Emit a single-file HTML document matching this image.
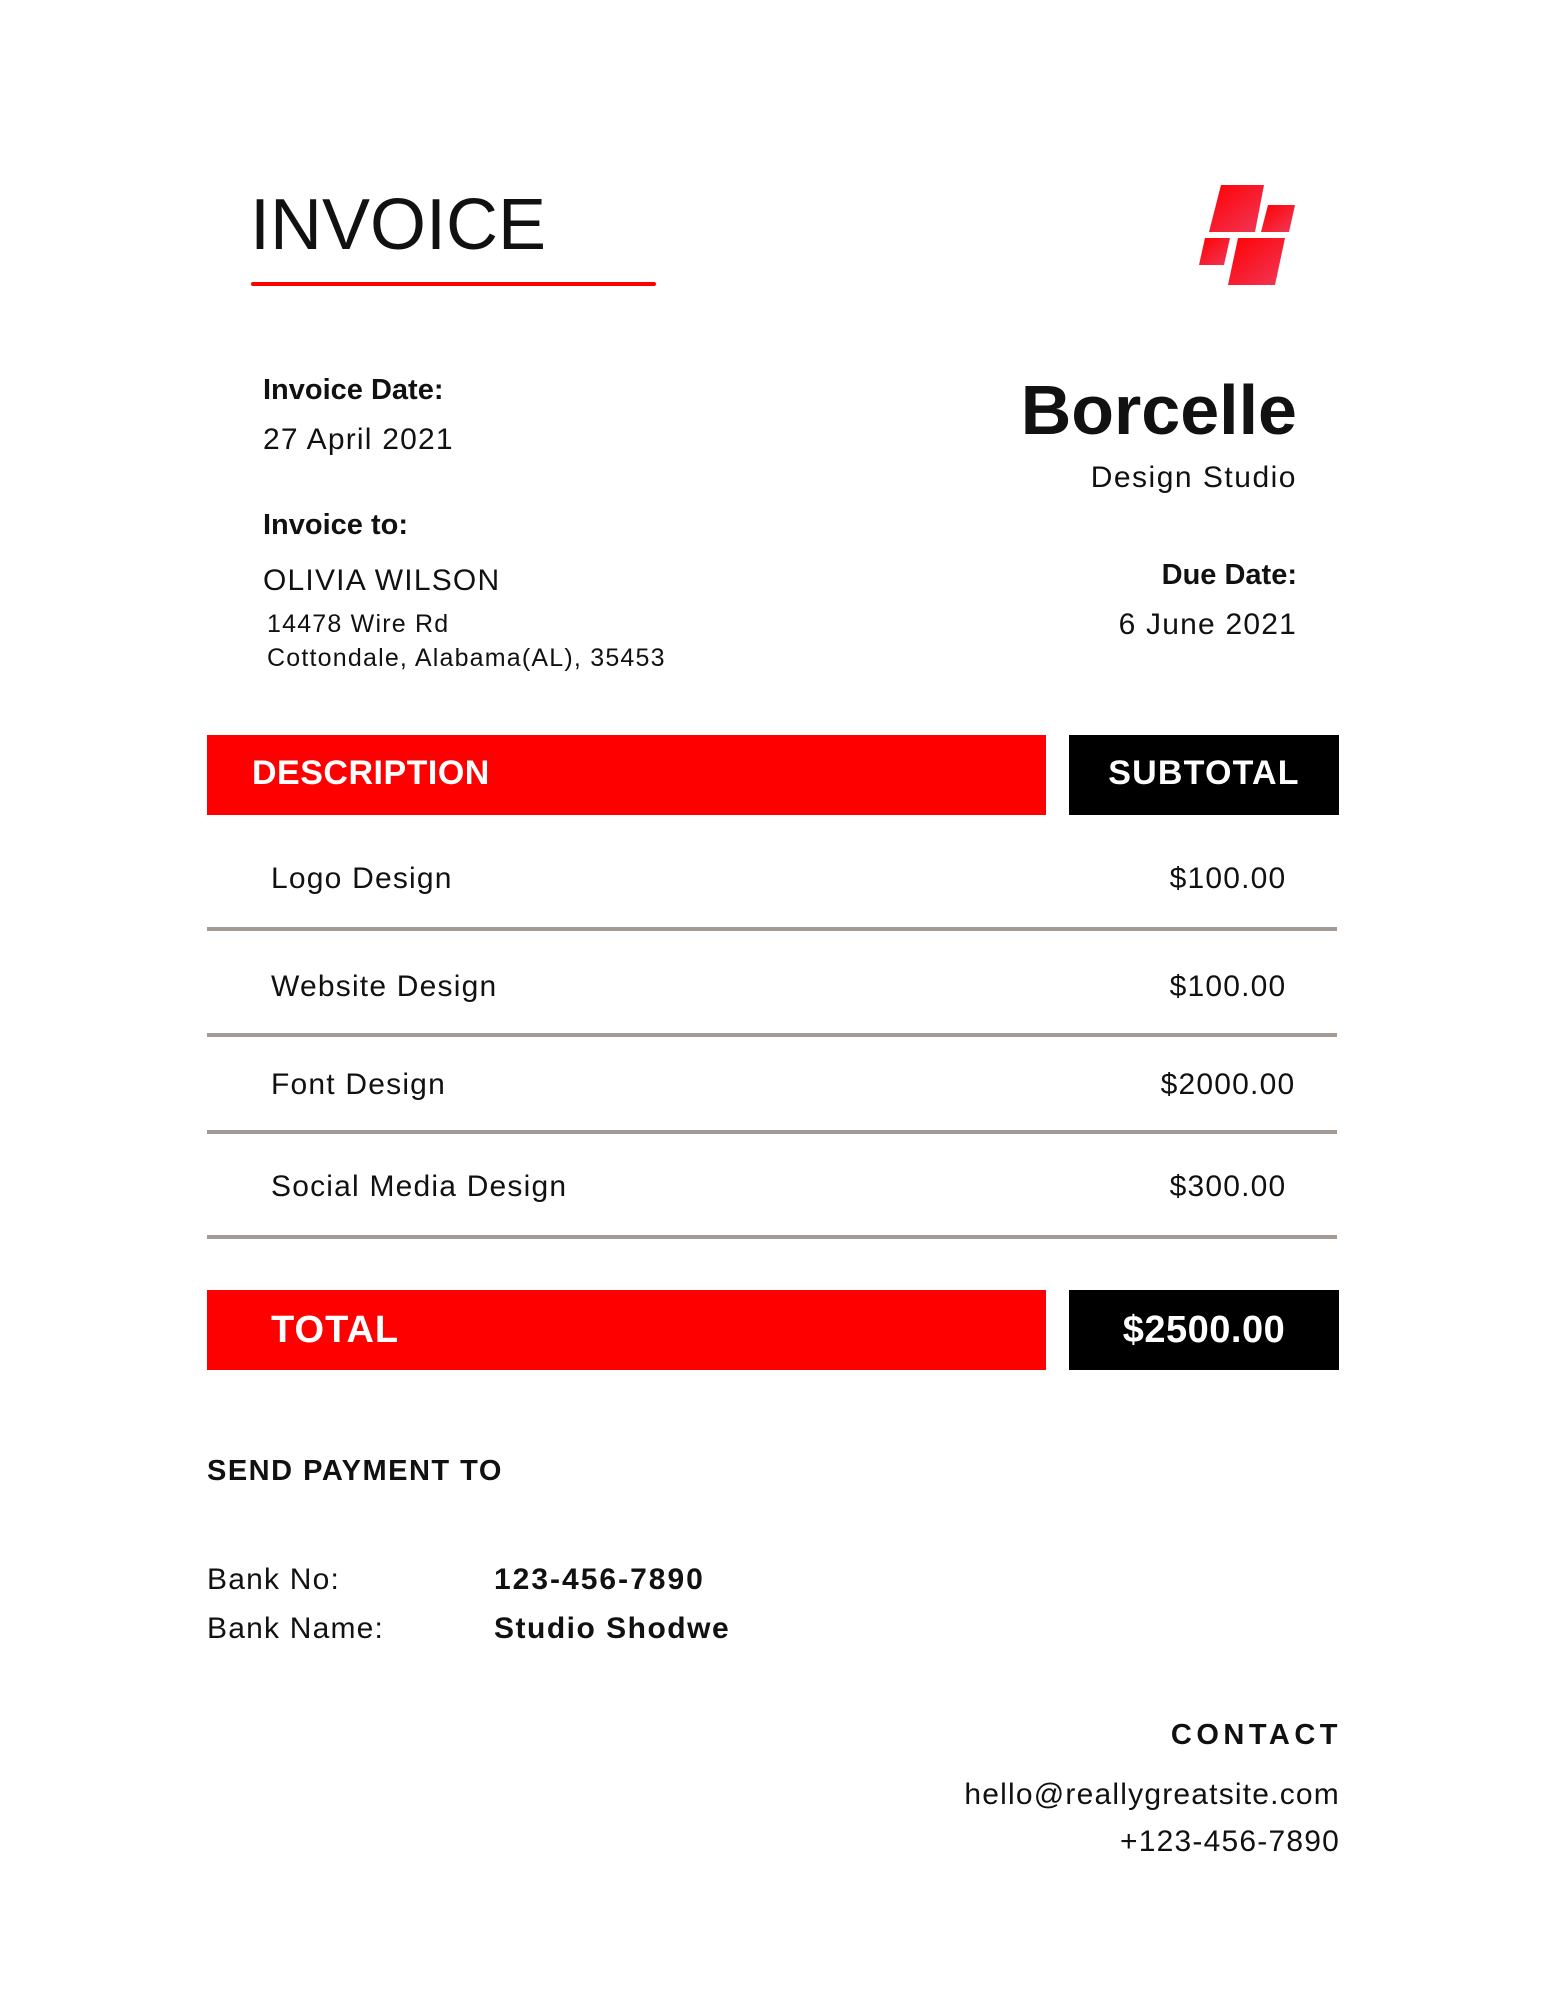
<!DOCTYPE html>
<html><head><meta charset="utf-8"><style>
*{margin:0;padding:0;box-sizing:border-box}
body{width:1545px;height:2000px;background:#fff;position:relative;font-family:"Liberation Sans",sans-serif;color:#111;overflow:hidden}
.t{position:absolute;line-height:1;white-space:nowrap}
.r{text-align:right}
.b{font-weight:bold}
.s{letter-spacing:1.2px}
.bar{position:absolute}
.line{position:absolute;left:207px;width:1130px;height:4px;background:#a39a93}
</style></head><body>
<div class="t" style="left:250px;top:189px;font-size:72px;font-weight:300;color:#111">INVOICE</div>
<div class="bar" style="left:251px;top:282px;width:405px;height:4px;background:#f00;border-radius:2px"></div>

<svg style="position:absolute;left:1195px;top:183px" width="105" height="105" viewBox="1195 183 105 105">
<defs><linearGradient id="g" x1="0" y1="0" x2="1" y2="1"><stop offset="0" stop-color="#ff0000"/><stop offset="1" stop-color="#f0385a"/></linearGradient></defs>
<g fill="url(#g)">
<polygon points="1221,185 1264,185 1255,232 1209,232"/>
<polygon points="1268,205 1295,205 1289,232 1261,232"/>
<polygon points="1205,238 1230,238 1224,265 1199,265"/>
<polygon points="1238,238 1285,238 1275,285 1228,285"/>
</g></svg>

<div class="t b" style="left:263px;top:376px;font-size:29px">Invoice Date:</div>
<div class="t s" style="left:263px;top:425px;font-size:30px">27 April 2021</div>
<div class="t b" style="left:263px;top:511px;font-size:29px">Invoice to:</div>
<div class="t s" style="left:263px;top:566px;font-size:30px">OLIVIA WILSON</div>
<div class="t" style="left:267px;top:612px;font-size:25px;letter-spacing:1.2px">14478 Wire Rd</div>
<div class="t" style="left:267px;top:646px;font-size:25px;letter-spacing:1.2px">Cottondale, Alabama(AL), 35453</div>

<div class="t b r" style="right:248px;top:375px;font-size:70px">Borcelle</div>
<div class="t r" style="right:248px;top:463px;font-size:30px;letter-spacing:1.5px">Design Studio</div>
<div class="t b r" style="right:248px;top:561px;font-size:29px">Due Date:</div>
<div class="t r s" style="right:248px;top:610px;font-size:30px">6 June 2021</div>

<div class="bar" style="left:207px;top:735px;width:839px;height:80px;background:#f00"></div>
<div class="bar" style="left:1069px;top:735px;width:270px;height:80px;background:#000"></div>
<div class="t b" style="left:252px;top:756px;font-size:34px;color:#fff;letter-spacing:0.5px">DESCRIPTION</div>
<div class="t b" style="left:1069px;width:270px;text-align:center;top:756px;font-size:34px;color:#fff;letter-spacing:1.2px">SUBTOTAL</div>

<div class="t s" style="left:271px;top:864px;font-size:30px">Logo Design</div>
<div class="t s" style="left:1128px;width:200px;text-align:center;top:864px;font-size:30px">$100.00</div>
<div class="line" style="top:927px"></div>
<div class="t s" style="left:271px;top:972px;font-size:30px">Website Design</div>
<div class="t s" style="left:1128px;width:200px;text-align:center;top:972px;font-size:30px">$100.00</div>
<div class="line" style="top:1033px"></div>
<div class="t s" style="left:271px;top:1070px;font-size:30px">Font Design</div>
<div class="t s" style="left:1128px;width:200px;text-align:center;top:1070px;font-size:30px">$2000.00</div>
<div class="line" style="top:1130px"></div>
<div class="t s" style="left:271px;top:1172px;font-size:30px">Social Media Design</div>
<div class="t s" style="left:1128px;width:200px;text-align:center;top:1172px;font-size:30px">$300.00</div>
<div class="line" style="top:1235px"></div>

<div class="bar" style="left:207px;top:1290px;width:839px;height:80px;background:#f00"></div>
<div class="bar" style="left:1069px;top:1290px;width:270px;height:80px;background:#000"></div>
<div class="t b" style="left:271px;top:1311px;font-size:38px;color:#fff;letter-spacing:1px">TOTAL</div>
<div class="t b" style="left:1069px;width:270px;text-align:center;top:1311px;font-size:38px;color:#fff;letter-spacing:0.5px">$2500.00</div>

<div class="t b" style="left:207px;top:1457px;font-size:29px;letter-spacing:1.5px">SEND PAYMENT TO</div>
<div class="t s" style="left:207px;top:1565px;font-size:30px">Bank No:</div>
<div class="t b" style="left:494px;top:1565px;font-size:30px;letter-spacing:2px">123-456-7890</div>
<div class="t s" style="left:207px;top:1614px;font-size:30px">Bank Name:</div>
<div class="t b" style="left:494px;top:1614px;font-size:30px;letter-spacing:1.5px">Studio Shodwe</div>

<div class="t b r" style="right:203px;top:1721px;font-size:29px;letter-spacing:4.5px">CONTACT</div>
<div class="t r s" style="right:205px;top:1780px;font-size:30px">hello@reallygreatsite.com</div>
<div class="t r s" style="right:205px;top:1827px;font-size:30px">+123-456-7890</div>
</body></html>
